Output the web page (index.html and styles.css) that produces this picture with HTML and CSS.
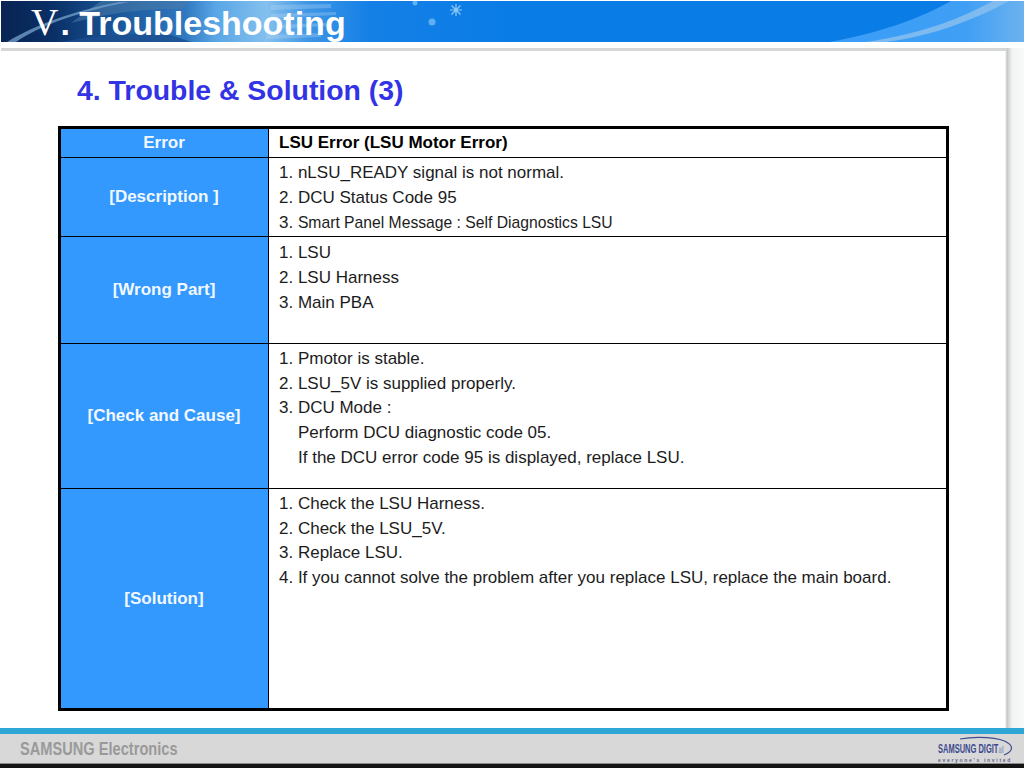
FILE: index.html
```html
<!DOCTYPE html>
<html lang="en">
<head>
<meta charset="utf-8">
<title>Troubleshooting</title>
<link rel="stylesheet" href="styles.css">
</head>
<body>
<div class="slide">
  <header class="banner">
    <svg class="banner-art" viewBox="0 0 1023 41" preserveAspectRatio="none" aria-hidden="true">
      <defs>
        <linearGradient id="base" x1="0" x2="1" y1="0" y2="0">
          <stop offset="0" stop-color="#082452"/>
          <stop offset=".05" stop-color="#0a2f66"/>
          <stop offset=".12" stop-color="#1c5a9e"/>
          <stop offset=".18" stop-color="#2f78c0"/>
          <stop offset=".21" stop-color="#5aa6e6"/>
          <stop offset=".26" stop-color="#84c0ee"/>
          <stop offset=".30" stop-color="#3f96e4"/>
          <stop offset=".36" stop-color="#1480e6"/>
          <stop offset=".5" stop-color="#0a7ce6"/>
          <stop offset="1" stop-color="#0a7ce6"/>
        </linearGradient>
        <linearGradient id="sheen" x1="0" x2="1" y1="0" y2="0">
          <stop offset="0" stop-color="#3a9df8"/>
          <stop offset=".7" stop-color="#3f9ff5"/>
          <stop offset="1" stop-color="#6cb2ee"/>
        </linearGradient>
      </defs>
      <rect width="1023" height="41" fill="url(#base)"/>
      <path d="M100 0H190L180 8C150 8 125 10 95 16L70 22Z" fill="#4d7ba8" opacity=".55"/>
      <path d="M15 41C40 24 80 10 128 1L118 1C72 10 34 24 6 41Z" fill="#6f9cc6" opacity=".8"/>
      <path d="M60 41C95 34 130 32 170 34L190 41Z" fill="#1c4f8f" opacity=".8"/>
      <path d="M270 4L330 3V7L270 9ZM270 13L335 11V14L270 17ZM275 24L325 22V25L275 28ZM265 34L320 32V36L265 38Z" fill="#bcdcf4" opacity=".3"/>
      <g fill="#5fb0f0">
        <circle cx="431" cy="21" r="3.500"/>
        <circle cx="414" cy="2" r="2.500"/>
      </g>
      <path d="M455 3V15M449 9H461M450.500 4.500L459.500 13.500M459.500 4.500L450.500 13.500" stroke="#8fcaf6" stroke-width="1.200"/>
      <path d="M828 41C880 32 922 16 950 0H1023V41Z" fill="url(#sheen)"/>
      <path d="M885 41C932 35 975 18 1008 0L992 0C962 16 925 32 865 41Z" fill="#8cc0ee" opacity=".8"/>
    </svg>
    <h1 class="banner-title"><span class="numeral">V</span>. Troubleshooting</h1>
  </header>
  <div class="body">
    <div class="rule"></div>
    <main class="content">
      <h2 class="section">4. Trouble &amp; Solution (3)</h2>
      <table class="sheet">
        <colgroup><col class="col-label"><col></colgroup>
        <tr class="row-head">
          <th>Error</th>
          <td class="strong">LSU Error (LSU Motor Error)</td>
        </tr>
        <tr class="row-desc">
          <th>[Description ]</th>
          <td><p>1. nLSU_READY signal is not normal.</p><p>2. DCU Status Code 95</p><p>3. <span class="small">Smart Panel Message : Self Diagnostics LSU</span></p></td>
        </tr>
        <tr class="row-part">
          <th>[Wrong Part]</th>
          <td><p>1. LSU</p><p>2. LSU Harness</p><p>3. Main PBA</p></td>
        </tr>
        <tr class="row-check">
          <th>[Check and Cause]</th>
          <td><p>1. Pmotor is stable.</p><p>2. LSU_5V is supplied properly.</p><p>3. DCU Mode :</p><p class="indent">Perform DCU diagnostic code 05.</p><p class="indent">If the DCU error code 95 is displayed, replace LSU.</p></td>
        </tr>
        <tr class="row-solution">
          <th>[Solution]</th>
          <td><p>1. Check the LSU Harness.</p><p>2. Check the LSU_5V.</p><p>3. Replace LSU.</p><p>4. If you cannot solve the problem after you replace LSU, replace the main board.</p></td>
        </tr>
      </table>
    </main>
  </div>
  <footer class="footer">
    <span class="brand">SAMSUNG Electronics</span>
    <div class="logo">
      <svg class="logo-arc" viewBox="0 0 76 22" aria-hidden="true"><path d="M22 4C38 1 62 2 70 8C76 12 74 17 66 20" fill="none" stroke="#3f4a8c" stroke-width="1.200"/></svg>
      <span class="logo-name">SAMSUNG DIGIT<span class="logo-all">all</span></span>
      <span class="logo-tag">everyone's invited</span>
    </div>
  </footer>
  <div class="baseline"></div>
</div>
</body>
</html>
```
FILE: styles.css
```css
* { box-sizing: border-box; }
html, body { margin: 0; padding: 0; background: #fff; }
.slide {
  width: 1024px;
  height: 768px;
  display: flex;
  flex-direction: column;
  overflow: hidden;
  background: #fff;
  font-family: "Liberation Sans", Arial, sans-serif;
}
.banner {
  position: relative;
  height: 41px;
  margin: 1px 0 0 1px;
  flex: none;
}
.banner-art { position: absolute; inset: 0; width: 100%; height: 100%; display: block; }
.banner-title {
  position: relative;
  margin: 0;
  padding-left: 30px;
  font-size: 34px;
  line-height: 42px;
  font-weight: 700;
  color: #fff;
  white-space: nowrap;
}
.numeral { font-family: "Liberation Serif", serif; font-weight: 400; font-size: 38px; padding-right: 2px; }
.body {
  flex: 1;
  min-height: 0;
  margin-top: 6px;
  display: flex;
  flex-direction: column;
  background: linear-gradient(90deg, #fff 0, #fff 1005px, #c4c6c6 1007px, #d8d9d9 1009px, #f2f3f3 1012px, #f8f9f9 1024px);
}
.rule { height: 3px; flex: none; background: #d6d8d8; margin: 0 17px 0 1px; }
.content { flex: 1; padding: 0 0 0 58px; min-height: 0; }
.section {
  margin: 23px 0 19px 19px;
  font-size: 28.400px;
  line-height: 33px;
  font-weight: 700;
  color: #3333e6;
}
.sheet {
  width: 891px;
  height: 582px;
  table-layout: fixed;
  border-collapse: collapse;
  border: 3px solid #000;
  font-size: 17px;
  color: #1c1c1c;
  background: #fff;
}
.col-label { width: 209px; }
.sheet th, .sheet td { border: 1px solid #000; padding: 0; }
.sheet th {
  background: #3399ff;
  color: #f2f8ff;
  font-size: 17px;
  font-weight: 700;
  text-align: center;
  vertical-align: middle;
  padding-right: 1px;
}
.sheet td { padding: 3px 10px 0; vertical-align: top; }
.sheet td.strong { font-weight: 700; vertical-align: middle; padding-top: 0; color: #000; }
.sheet p { margin: 0; line-height: 24.7px; }
.sheet .row-desc p, .sheet .row-part p { line-height: 25px; }
.sheet .row-desc td { padding-top: 2px; }
.sheet .row-part td { padding-top: 3px; }
.small { font-size: 15.700px; }
.indent { padding-left: 19px; }
.row-head { height: 30px; }
.row-desc { height: 79px; }
.row-part { height: 107px; }
.row-check { height: 145px; }
.row-solution { height: 221px; }
.footer {
  flex: none;
  height: 36px;
  border-top: 6px solid #2ea6d6;
  background: #d8d8d8;
  display: flex;
  align-items: center;
  justify-content: space-between;
  padding: 0 10px 0 20px;
  box-shadow: inset 0 -1px 0 #8a8a8a;
}
.brand {
  display: inline-block;
  font-weight: 700;
  font-size: 18.500px;
  color: #9a9a9a;
  white-space: nowrap;
  transform: scaleX(.79);
  transform-origin: left center;
}
.logo {
  position: relative;
  width: 76px;
  height: 29px;
  margin-top: -1px;
  display: flex;
  flex-direction: column;
  justify-content: flex-end;
  color: #3c4a8e;
  white-space: nowrap;
}
.logo-arc { position: absolute; left: 0; top: 1px; width: 76px; height: 22px; }
.logo-name {
  position: relative;
  font-size: 12.500px;
  line-height: 13px;
  font-weight: 700;
  transform: scaleX(.6);
  transform-origin: left center;
}
.logo-all { font-size: 9px; font-weight: 400; color: #7c86b4; }
.logo-tag { position: relative; font-size: 5px; line-height: 6px; letter-spacing: 1.700px; color: #5e6488; font-weight: 700; }
.baseline { flex: none; height: 4px; background: #141414; }
```
